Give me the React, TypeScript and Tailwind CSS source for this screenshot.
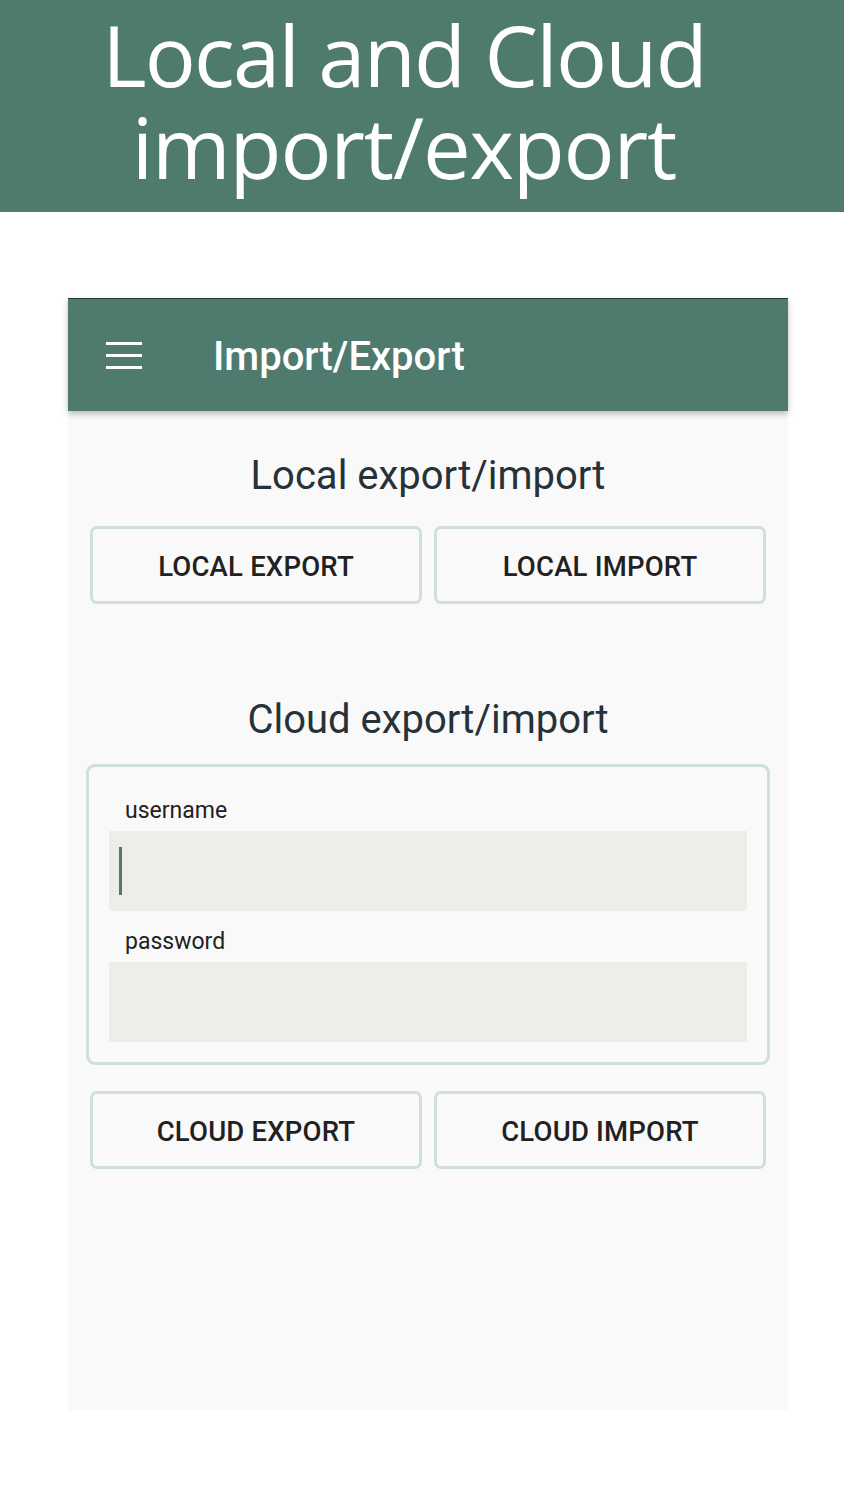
import { useState } from 'react'

function OutlineButton({ label }: { label: string }) {
  return (
    <button className="flex h-[78px] flex-1 items-center justify-center rounded-[7px] border-[3px] border-[#cfdfdc] bg-[#f9f9f9] pt-[3px] text-[27.5px] font-medium tracking-[0.2px] text-[#212121]">
      {label}
    </button>
  )
}

function Field({ label, focused }: { label: string; focused?: boolean }) {
  return (
    <div className="flex flex-col">
      <div className="flex h-[41px] items-center pl-4 pt-[2px] text-[23px] text-[#212121]">{label}</div>
      <div className="flex h-[80px] items-center bg-[#eeeee8] pl-[10px]">
        {focused && <div className="h-[48px] w-[3px] bg-[#4e7b6e]" />}
      </div>
    </div>
  )
}

export default function App() {
  const [menuOpen] = useState(false)

  return (
    <div className="min-h-[1500px] w-[844px] bg-white font-['Roboto',sans-serif]">
      <div className="flex h-[212px] flex-col items-center bg-[#4e7b6e] pr-9 pt-[8px] font-['Open_Sans',sans-serif] text-[85px] leading-[92px] text-white">
        <div className="tracking-[-1.8px]">Local and Cloud</div>
        <div className="tracking-[-1.2px]">import/export</div>
      </div>

      <div className="ml-[68px] mt-[86px] flex h-[1112px] w-[720px] flex-col bg-[#f9f9f9]">
        <div className="relative z-10 flex h-[113px] items-center border-t border-[#263a33] bg-[#4e7b6e] shadow-[0_3px_6px_rgba(0,0,0,0.25)]">
          <button className="ml-[38px] flex w-9 flex-col gap-[9px]" aria-expanded={menuOpen}>
            <span className="h-[3px] w-9 bg-white" />
            <span className="h-[3px] w-9 bg-white" />
            <span className="h-[3px] w-9 bg-white" />
          </button>
          <div className="ml-[71px] mt-[4px] text-[40px] font-medium text-white">Import/Export</div>
        </div>

        <div className="flex flex-col px-[20px]">
          <h2 className="mt-[40px] text-center text-[40px] leading-[50px] text-[#263238]">Local export/import</h2>
          <div className="mt-[25px] flex gap-3 px-[2px]">
            <OutlineButton label="LOCAL EXPORT" />
            <OutlineButton label="LOCAL IMPORT" />
          </div>

          <h2 className="mt-[91px] text-center text-[40px] leading-[50px] text-[#263238]">Cloud export/import</h2>
          <div className="mx-[-2px] mt-[19px] flex flex-col rounded-[9px] border-[3px] border-[#cfdfdc] px-5 pb-[20px] pt-[23px]">
            <div className="flex flex-col gap-[10px]">
              <Field label="username" focused />
              <Field label="password" />
            </div>
          </div>
          <div className="mt-[26px] flex gap-3 px-[2px]">
            <OutlineButton label="CLOUD EXPORT" />
            <OutlineButton label="CLOUD IMPORT" />
          </div>
        </div>
      </div>
    </div>
  )
}
